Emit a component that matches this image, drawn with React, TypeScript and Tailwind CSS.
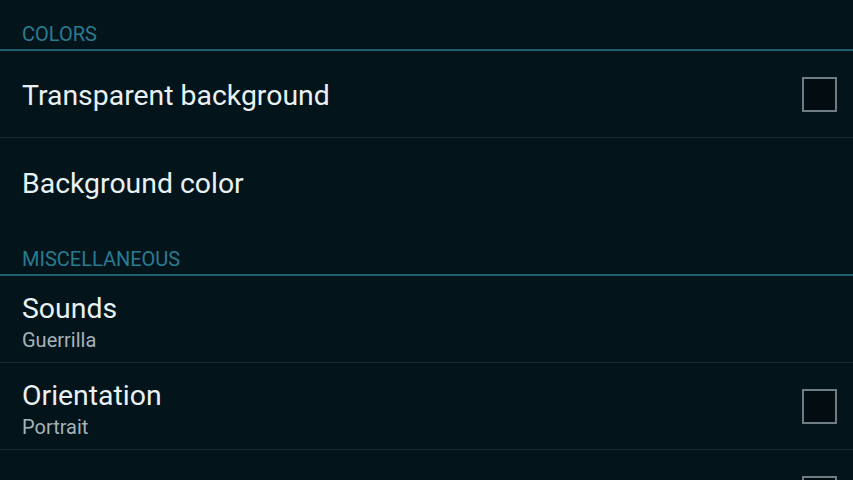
import React from "react";

function Header({ label }: { label: string }) {
  return (
    <div>
      <div className="h-[49px] flex items-end pb-[3px] pl-[22px] text-[20px] leading-[24px] text-[#2a7b90] uppercase">
        {label}
      </div>
      <div className="h-[2px] bg-[#1d5e6f]" />
    </div>
  );
}

function Row({
  title,
  summary,
  checkbox,
  divider = true,
}: {
  title?: string;
  summary?: string;
  checkbox?: boolean;
  divider?: boolean;
}) {
  return (
    <div className={"h-[87px] flex items-center pl-[22px] pr-[16px]" + (divider ? " border-b border-[#1b2a31]" : "")}>
      <div className={"flex-1 flex flex-col" + (summary ? " pt-[6px]" : " pt-[4px]")}>
        {title && <div className="text-[28.4px] leading-[34px] text-[#e9f1f3]">{title}</div>}
        {summary && <div className="text-[20px] leading-[26px] mt-[1px] text-[#a5b3b8]">{summary}</div>}
      </div>
      {checkbox && <div className="w-[35px] h-[35px] border-2 border-[#6e7d83] bg-[#020c11]" />}
    </div>
  );
}

export default function App() {
  return (
    <div className="w-[853px] h-[480px] overflow-hidden bg-[#04141b] font-['Roboto',sans-serif]">
      <Header label="Colors" />
      <Row title="Transparent background" checkbox />
      <Row title="Background color" divider={false} />
      <Header label="Miscellaneous" />
      <Row title="Sounds" summary="Guerrilla" />
      <Row title="Orientation" summary="Portrait" checkbox />
      <Row checkbox />
    </div>
  );
}
